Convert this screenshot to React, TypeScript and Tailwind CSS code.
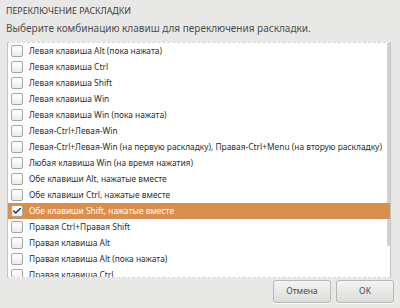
import { Check } from "lucide-react";

const OPTIONS = [
  "Левая клавиша Alt (пока нажата)",
  "Левая клавиша Ctrl",
  "Левая клавиша Shift",
  "Левая клавиша Win",
  "Левая клавиша Win (пока нажата)",
  "Левая-Ctrl+Левая-Win",
  "Левая-Ctrl+Левая-Win (на первую раскладку), Правая-Ctrl+Menu (на вторую раскладку)",
  "Любая клавиша Win (на время нажатия)",
  "Обе клавиши Alt, нажатые вместе",
  "Обе клавиши Ctrl, нажатые вместе",
  "Обе клавиши Shift, нажатые вместе",
  "Правая Ctrl+Правая Shift",
  "Правая клавиша Alt",
  "Правая клавиша Alt (пока нажата)",
  "Правая клавиша Ctrl",
];

const SELECTED = "Обе клавиши Shift, нажатые вместе";

function Row({ label }: { label: string }) {
  const on = label === SELECTED;
  return (
    <div
      className={
        "relative z-10 flex items-center h-4 shrink-0 pl-[3px] whitespace-nowrap " +
        (on ? "bg-[#da8f4e] text-white" : "text-[#2b2f30]")
      }
    >
      <span className="w-[12px] h-[12px] rounded-[2px] border border-[#a4a7a3] bg-gradient-to-b from-white to-[#ecedeb] flex items-center justify-center shrink-0">
        {on && <Check size={10} strokeWidth={3.5} className="text-[#2e3436]" />}
      </span>
      <span className="ml-[6px] text-[8.4px] leading-4">{label}</span>
    </div>
  );
}

export default function App() {
  return (
    <div
      className="w-[400px] h-[308px] bg-[#e8e8e7] flex flex-col overflow-hidden"
      style={{ fontFamily: '"Noto Sans", "DejaVu Sans", sans-serif' }}
    >
      <div className="px-[6px] pt-[5px] text-[8.8px] leading-[12px] text-[#3a3a3a]">
        ПЕРЕКЛЮЧЕНИЕ РАСКЛАДКИ
      </div>
      <div className="px-[6px] mt-[4px] text-[10px] leading-[14px] text-[#4e4e4e]">
        Выберите комбинацию клавиш для переключения раскладки.
      </div>

      <div className="relative mt-[7px] ml-[7px] mr-[9px] h-[236px] bg-white border border-[#c4c5c3] [border-top-style:dashed] [border-bottom-style:dashed] [border-top-color:#d6d6d6] [border-bottom-color:#d6d6d6] overflow-hidden flex flex-col">
        <div className="absolute right-0 top-0 w-[3px] h-[203px] bg-[#d2d3d1] z-0" />
        {OPTIONS.map((o) => (
          <Row key={o} label={o} />
        ))}
      </div>

      <div className="flex justify-end gap-[5px] pr-[6px] mt-[2px]">
        {["Отмена", "OK"].map((b) => (
          <button
            key={b}
            className="w-[58px] h-[23px] rounded-[3px] border border-[#b6b8b4] bg-gradient-to-b from-[#f4f4f3] to-[#dcdddb] text-[8.5px] text-[#4a4a4a] shadow-[0_1px_0_rgba(255,255,255,0.8)]"
          >
            {b}
          </button>
        ))}
      </div>
    </div>
  );
}
